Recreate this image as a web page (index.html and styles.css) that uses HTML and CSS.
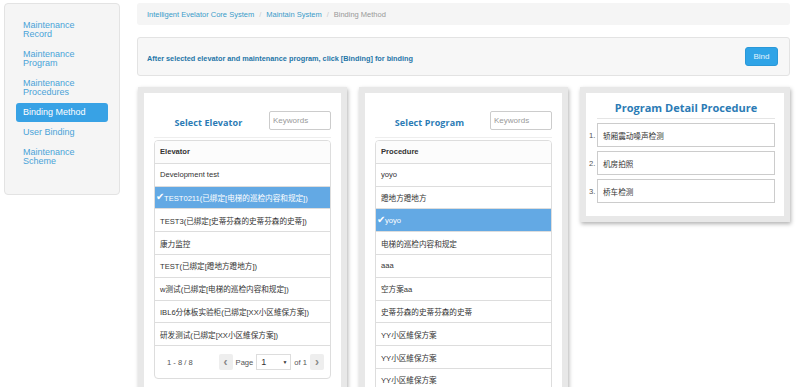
FILE: index.html
```html
<!DOCTYPE html>
<html lang="en">
<head>
<meta charset="UTF-8">
<meta name="viewport" content="width=device-width, initial-scale=1.0">
<title>Binding Method</title>
<link rel="stylesheet" href="styles.css">
</head>
<body>
<div class="page">
    <aside class="sidebar">
        <ul class="side-nav">
            <li><a href="#">Maintenance Record</a></li>
            <li><a href="#">Maintenance Program</a></li>
            <li><a href="#">Maintenance Procedures</a></li>
            <li class="active"><a href="#">Binding Method</a></li>
            <li><a href="#">User Binding</a></li>
            <li><a href="#">Maintenance Scheme</a></li>
        </ul>
    </aside>

    <main class="main">
        <div class="breadcrumb">
            <a href="#">Intelligent Evelator Core System</a>
            <span class="divider">/</span>
            <a href="#">Maintain System</a>
            <span class="divider">/</span>
            <span class="current">Binding Method</span>
        </div>

        <div class="notice">
            <span class="notice-text">After selected elevator and maintenance program, click [Binding] for binding</span>
            <button class="btn-bind">Bind</button>
        </div>

        <div class="panels">
            <!-- elevators -->
            <section class="panel panel-list">
                <div class="panel-head">
                    <h3 class="panel-title">Select Elevator</h3>
                    <input type="text" class="keyword-input" placeholder="Keywords">
                </div>
                <div class="list">
                    <div class="row row-header">Elevator</div>
                    <div class="row">Development test</div>
                    <div class="row selected"><span class="check">✔</span>TEST0211(已绑定[电梯的巡检内容和规定])</div>
                    <div class="row">TEST3(已绑定[史蒂芬森的史蒂芬森的史蒂])</div>
                    <div class="row">康力监控</div>
                    <div class="row">TEST(已绑定[蹬地方蹬地方])</div>
                    <div class="row">w测试(已绑定[电梯的巡检内容和规定])</div>
                    <div class="row">IBL6分体板实验柜(已绑定[XX小区維保方案])</div>
                    <div class="row">研发测试(已绑定[XX小区維保方案])</div>
                    <div class="pager">
                        <span class="pager-count">1 - 8 / 8</span>
                        <div class="pager-controls">
                            <span class="pager-btn">&lsaquo;</span>
                            <span class="pager-label">Page</span>
                            <span class="pager-select"><span>1</span><span class="caret">▼</span></span>
                            <span class="pager-label">of 1</span>
                            <span class="pager-btn">&rsaquo;</span>
                        </div>
                    </div>
                </div>
            </section>

            <!-- programs -->
            <section class="panel panel-list">
                <div class="panel-head">
                    <h3 class="panel-title">Select Program</h3>
                    <input type="text" class="keyword-input" placeholder="Keywords">
                </div>
                <div class="list">
                    <div class="row row-header">Procedure</div>
                    <div class="row">yoyo</div>
                    <div class="row">蹬地方蹬地方</div>
                    <div class="row selected"><span class="check">✔</span>yoyo</div>
                    <div class="row">电梯的巡检内容和规定</div>
                    <div class="row">aaa</div>
                    <div class="row">空方案aa</div>
                    <div class="row">史蒂芬森的史蒂芬森的史蒂</div>
                    <div class="row">YY小区維保方案</div>
                    <div class="row">YY小区維保方案</div>
                    <div class="row">YY小区維保方案</div>
                </div>
            </section>

            <!-- procedure detail -->
            <section class="panel panel-detail">
                <h3 class="detail-title">Program Detail Procedure</h3>
                <ol class="steps">
                    <li class="step"><span class="step-num">1.</span><div class="step-box">轿厢震动噪声检测</div></li>
                    <li class="step"><span class="step-num">2.</span><div class="step-box">机房拍照</div></li>
                    <li class="step"><span class="step-num">3.</span><div class="step-box">桥车检测</div></li>
                </ol>
            </section>
        </div>
    </main>
</div>
</body>
</html>
```

FILE: styles.css
```css
body {
    margin: 0;
    font-family: "Liberation Sans", "Noto Sans CJK SC", sans-serif;
    font-size: 7.6px;
    color: #333;
    background: #fff;
}

.page {
    display: flex;
    align-items: flex-start;
    gap: 17px;
    padding: 3px 10px 0 4px;
}

/* sidebar */
.sidebar {
    width: 116px;
    height: 192px;
    box-sizing: border-box;
    background: #f5f5f5;
    border: 1px solid #e3e3e3;
    border-radius: 4px;
    padding: 12px 11px;
}

.side-nav {
    list-style: none;
    margin: 0;
    padding: 0;
}

.side-nav a {
    display: block;
    padding: 5px 7px;
    margin-bottom: 1px;
    font-size: 9px;
    line-height: 9px;
    color: #4aa3d8;
    text-decoration: none;
    border-radius: 3px;
}

.side-nav .active a {
    background: #38a2e5;
    color: #fff;
}

.main {
    flex: 1;
    min-width: 0;
}

/* breadcrumb */
.breadcrumb {
    height: 22px;
    display: flex;
    align-items: center;
    padding: 0 10px;
    background: #f5f5f5;
    border-radius: 3px;
    font-size: 7.5px;
}

.breadcrumb a {
    color: #3a9cca;
    text-decoration: none;
}

.breadcrumb .divider {
    color: #ccc;
    padding: 0 5px;
}

.breadcrumb .current {
    color: #999;
}

/* notice bar */
.notice {
    margin-top: 12px;
    height: 39px;
    box-sizing: border-box;
    display: flex;
    align-items: center;
    justify-content: space-between;
    padding: 0 11px 0 9px;
    background: #f7f7f7;
    border: 1px solid #e3e3e3;
    border-radius: 3px;
}

.notice-text {
    font-weight: bold;
    color: #1f76a8;
    font-size: 7.3px;
    padding-top: 3px;
}

.btn-bind {
    width: 33px;
    height: 19px;
    padding: 0;
    background: #2fa4e7;
    border: 1px solid #2a98d8;
    border-radius: 3px;
    color: #e4f3fc;
    font-family: "Liberation Sans", sans-serif;
    font-size: 8px;
}

/* panels */
.panels {
    margin-top: 11px;
    display: flex;
    align-items: flex-start;
    gap: 12px;
    padding-left: 1px;
}

.panel {
    box-sizing: border-box;
    background: #fff;
    border: 6px solid #e8e8e8;
    box-shadow: 1px 2px 4px rgba(0,0,0,0.3);
}

.panel-list {
    width: 209px;
    padding: 18px 10px 10px;
}

.panel-head {
    display: flex;
    align-items: center;
    gap: 6px;
    padding-bottom: 7px;
    border-bottom: 1px solid #eee;
}

.panel-title {
    flex: 1;
    margin: 0;
    padding-top: 3px;
    text-align: center;
    font-family: "Open Sans", sans-serif;
    font-size: 9px;
    font-weight: bold;
    letter-spacing: 0.1px;
    color: #2b7bb5;
}

.keyword-input {
    width: 62px;
    height: 19px;
    box-sizing: border-box;
    border: 1px solid #ccc;
    border-radius: 2px;
    padding: 0 3px;
    font-family: "Liberation Sans", sans-serif;
    font-size: 8px;
    outline: none;
}

.keyword-input::placeholder {
    color: #999;
}

.list {
    margin-top: 2px;
    border: 1px solid #ddd;
    border-radius: 4px;
    overflow: hidden;
}

.row {
    height: 22.8px;
    box-sizing: border-box;
    display: flex;
    align-items: center;
    padding-left: 5px;
    border-top: 1px solid #ddd;
    white-space: nowrap;
    overflow: hidden;
}

.row-header {
    height: 21.8px;
    border-top: none;
    font-weight: bold;
    background: #fcfcfc;
}

.row.selected {
    background: #63a9e4;
    color: #fff;
    padding-left: 1px;
}

.check {
    font-size: 10px;
    line-height: 1;
}

/* pager */
.pager {
    height: 33px;
    box-sizing: border-box;
    display: flex;
    align-items: center;
    justify-content: space-between;
    padding: 0 6px 0 12px;
    border-top: 1px solid #ddd;
    color: #555;
}

.pager-controls {
    display: flex;
    align-items: center;
    gap: 3px;
}

.pager-btn {
    width: 14px;
    height: 16px;
    display: flex;
    align-items: center;
    justify-content: center;
    background: #eee;
    border-radius: 2px;
    font-size: 12px;
    font-weight: bold;
    color: #888;
}

.pager-select {
    width: 35px;
    height: 16px;
    box-sizing: border-box;
    display: flex;
    align-items: center;
    justify-content: space-between;
    padding: 0 3px 0 4px;
    background: #fff;
    border: 1px solid #ddd;
    font-size: 9px;
    color: #333;
}

.pager-select .caret {
    font-size: 5px;
}

/* detail panel */
.panel-detail {
    width: 210px;
    padding: 7px 9px 13px 3px;
}

.detail-title {
    margin: 0 0 0 8px;
    padding-bottom: 2px;
    text-align: center;
    line-height: 16px;
    font-family: "Open Sans", sans-serif;
    font-size: 11px;
    font-weight: bold;
    color: #2b7bb5;
    border-bottom: 1px solid #e5e5e5;
}

.steps {
    list-style: none;
    margin: 4px 0 0;
    padding: 0;
    display: flex;
    flex-direction: column;
    gap: 4px;
}

.step {
    display: flex;
    align-items: center;
}

.step-num {
    width: 8px;
    color: #555;
}

.step-box {
    flex: 1;
    height: 24px;
    box-sizing: border-box;
    display: flex;
    align-items: center;
    padding-left: 5px;
    border: 1px solid #ccc;
}
```
